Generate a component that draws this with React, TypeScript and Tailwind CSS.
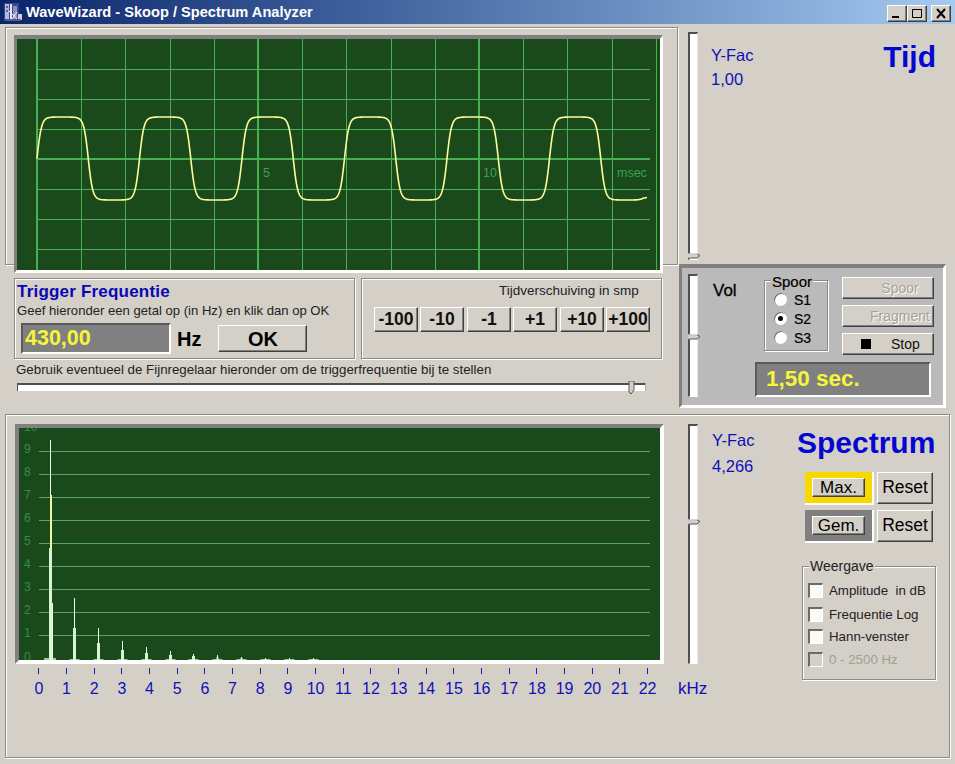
const FONT = '[font-family:"Liberation_Sans",Arial,sans-serif]'
const BLUE = 'text-[#1010b4]'
const RAISED =
  'border border-t-white border-l-white border-r-[#404040] border-b-[#404040] bg-[#d4d0c8] shadow-[inset_-1px_-1px_0_#808080]'
const ETCHED = 'border border-[#8c8a82] shadow-[1px_1px_0_#fff,inset_1px_1px_0_#fff]'
const READOUT =
  'flex items-center border-2 border-t-[#5a5a5a] border-l-[#5a5a5a] border-r-white border-b-white bg-[#808080] font-bold text-[#f5f53c]'

const SHIFT_BUTTONS = [
  { label: '-100', gap: 'mr-[2px]' },
  { label: '-10', gap: 'mr-[3px]' },
  { label: '-1', gap: 'mr-[2px]' },
  { label: '+1', gap: 'mr-[3px]' },
  { label: '+10', gap: 'mr-[2px]' },
  { label: '+100', gap: '' },
]

const SPIKES = [
  { x: 74.5, top: 598, thick: 628, w: 3 },
  { x: 98.5, top: 628, thick: 643, w: 3 },
  { x: 122.5, top: 641, thick: 650, w: 3 },
  { x: 146.5, top: 647, thick: 653, w: 3 },
  { x: 170.5, top: 651, thick: 655, w: 3 },
  { x: 193.5, top: 654, thick: 656, w: 3 },
  { x: 217.5, top: 655, thick: 657, w: 2 },
  { x: 241.5, top: 657, thick: 658, w: 2 },
  { x: 265.5, top: 658, thick: 659, w: 2 },
  { x: 289.5, top: 658, thick: 659, w: 1 },
  { x: 313.5, top: 658, thick: 659, w: 2 },
]

function wavePath() {
  const period = 102.5
  const k = 3.6
  const points: string[] = []
  for (let x = 37; x <= 643; x += 0.5) {
    const s = Math.sin((2 * Math.PI * (x - 37)) / period)
    const y = 158.5 - 41.5 * (Math.tanh(k * s) / Math.tanh(k))
    points.push(`${x},${y.toFixed(2)}`)
  }
  // the trace stops before the last rise
  points.push('647,197.5')
  return `M${points.join(' L')}`
}

function AppIcon() {
  return (
    <svg width="20" height="20" viewBox="0 0 20 20" className="mr-[3px] shrink-0">
      <rect x="1" y="1" width="15" height="18" fill="#3a4688" />
      <rect x="2" y="2" width="4" height="15" fill="#b4b8dc" />
      <rect x="3" y="4" width="2" height="2" fill="#5a62a0" />
      <rect x="3" y="8" width="2" height="2" fill="#5a62a0" />
      <rect x="7" y="2" width="2" height="15" fill="#e8e8f4" />
      <rect x="10" y="4" width="4" height="13" fill="#8a90c8" />
      <path d="M6 9 L14 17 M14 10 L9 17" stroke="#f4f4fa" strokeWidth="1" />
      <rect x="15" y="12" width="4" height="6" fill="#d0d0d8" />
      <rect x="3" y="17" width="15" height="2" fill="#5a5a88" />
    </svg>
  )
}

function CaptionButton({ kind, className = '' }: { kind: 'min' | 'max' | 'close'; className?: string }) {
  return (
    <div className={`flex h-[17px] w-[20px] items-center justify-center ${RAISED} ${className}`}>
      <svg width="12" height="11" viewBox="0 0 12 11">
        {kind === 'min' && <rect x="1" y="8" width="7" height="2" fill="#000" />}
        {kind === 'max' && (
          <path d="M1.5 1.5 H10.5 V9.5 H1.5 Z M1 1.5 H11" fill="none" stroke="#000" strokeWidth="1" />
        )}
        {kind === 'close' && <path d="M2 1 L10 10 M10 1 L2 10" stroke="#000" strokeWidth="2" />}
      </svg>
    </div>
  )
}

function VSlider({ height, thumb }: { height: string; thumb: string }) {
  return (
    <div
      className={`relative w-[10px] shrink-0 border-2 border-r border-b border-t-[#505050] border-l-[#505050] border-r-[#e8e8e8] border-b-white bg-white ${height}`}
    >
      <svg width="14" height="6" viewBox="0 0 14 6" className={`absolute left-[-3px] ${thumb}`}>
        <path d="M0 1 H10 L13 2.5 L10 5 H3 L2 6" fill="#d4d0c8" stroke="#555" strokeWidth="1" />
        <path d="M0 1 H10" stroke="#fff" strokeWidth="1" />
      </svg>
    </div>
  )
}

function Oscilloscope() {
  const verticals = Array.from({ length: 15 }, (_, i) => Math.round(37 + i * 44.2))
  const horizontals = [69, 99, 129, 189, 219, 249]
  return (
    <div className="h-[238px] w-[649px] border-t-4 border-l-3 border-r-3 border-b-3 border-t-[#808080] border-l-[#808080] border-r-white border-b-white">
      <svg width="643" height="231" viewBox="17 39 643 231" className="block bg-[#1a4a1c]">
        {verticals.map((x, i) =>
          i % 5 === 0 ? (
            <line key={x} x1={x} x2={x} y1="39" y2="270" stroke="#4aae55" strokeWidth="2" />
          ) : (
            <line key={x} x1={x + 0.5} x2={x + 0.5} y1="39" y2="270" stroke="#4aae55" />
          ),
        )}
        {horizontals.map((y) => (
          <line key={y} x1="37" x2="650" y1={y + 0.5} y2={y + 0.5} stroke="#4aae55" />
        ))}
        <line x1="37" x2="650" y1="159" y2="159" stroke="#4aae55" strokeWidth="2" />
        <path d={wavePath()} fill="none" stroke="#fdfd9c" strokeWidth="1.6" />
        <g fontFamily="Liberation Sans" fontSize="12.5" fill="#3f9f50">
          <text x="263" y="177">5</text>
          <text x="483" y="177">10</text>
          <text x="617" y="177">msec</text>
        </g>
      </svg>
    </div>
  )
}

function SpectrumPlot() {
  const lines = [9, 8, 7, 6, 5, 4, 3, 2, 1]
  const yOf = (n: number) => Math.round(658.5 - n * 23.05) + 0.5
  return (
    <div className="h-[240px] w-[649px] border-t-4 border-l-4 border-r-4 border-b-4 border-t-[#808080] border-l-[#808080] border-r-white border-b-white">
      <svg width="641" height="232" viewBox="19 428 641 232" className="block bg-[#1a4a1c]">
        {lines.map((n) => (
          <line key={n} x1="39" x2="650" y1={yOf(n)} y2={yOf(n)} stroke="#57a560" />
        ))}
        <g fontFamily="Liberation Sans" fontSize="12" fill="#3a8a46">
          <text x="24" y="431">10</text>
          {[...lines, 0].map((n) => (
            <text key={n} x="24" y={yOf(n) + 1}>
              {n}
            </text>
          ))}
        </g>
        <rect x="44" y="658" width="12" height="2" fill="#e0f5dc" opacity="0.7" />
        <line x1="50.5" x2="50.5" y1="440" y2="660" stroke="#eaffe4" />
        <line x1="51" x2="51" y1="495" y2="660" stroke="#f5f5a8" strokeWidth="2" />
        <rect x="49" y="548" width="3" height="112" fill="#d4f5d0" />
        <line x1="52.5" x2="52.5" y1="603" y2="660" stroke="#eaffe4" />
        {SPIKES.map((s) => (
          <g key={s.x}>
            <rect x={s.x - 5} y="659" width="10" height="1" fill="#e0f5dc" opacity="0.7" />
            <line x1={s.x} x2={s.x} y1={s.top} y2="660" stroke="#eaffe4" />
            <rect x={s.x - s.w / 2} y={s.thick} width={s.w} height={660 - s.thick} fill="#d4f5d0" />
          </g>
        ))}
      </svg>
    </div>
  )
}

function Radio({ label, checked = false }: { label: string; checked?: boolean }) {
  return (
    <div className="flex h-[19px] items-center">
      <div className="flex h-[13px] w-[13px] items-center justify-center rounded-full bg-white shadow-[inset_1px_1px_0_#707070]">
        {checked && <div className="h-[5px] w-[5px] rounded-full bg-black" />}
      </div>
      <span className="ml-[7px] text-[14px] leading-none text-black [-webkit-text-stroke:0.2px_#000]">{label}</span>
    </div>
  )
}

function Check({ label, disabled = false, className = '' }: { label: string; disabled?: boolean; className?: string }) {
  return (
    <div className={`flex h-[15px] items-center ${className}`}>
      <div
        className={`h-[15px] w-[15px] border-2 border-r border-b border-t-[#6a6a6a] border-l-[#6a6a6a] border-r-white border-b-white ${
          disabled ? 'bg-[#d4d0c8]' : 'bg-[#fafaf6]'
        }`}
      />
      <span className={`ml-[6px] whitespace-pre text-[13.3px] leading-none ${disabled ? 'text-[#a19e96]' : 'text-[#222]'}`}>{label}</span>
    </div>
  )
}

function ModeRow({ label, frame, mt = '' }: { label: string; frame: string; mt?: string }) {
  return (
    <div className={`flex ${mt}`}>
      <div className={`flex h-[33px] w-[69px] items-center justify-center ${frame}`}>
        <div className={`flex h-[19px] w-[53px] items-center justify-center text-[17px] leading-none text-black ${RAISED}`}>
          {label}
        </div>
      </div>
      <div className={`ml-[3px] flex h-[32px] w-[56px] items-center justify-center text-[17.5px] leading-none text-black ${RAISED}`}>
        Reset
      </div>
    </div>
  )
}

export default function App() {
  return (
    <div className={`flex h-[764px] w-[955px] flex-col overflow-hidden bg-[#d4d0c8] ${FONT}`}>
      {/* title bar */}
      <div className="flex h-[24px] shrink-0 items-center bg-gradient-to-r from-[#0a246a] to-[#a6caf0] pl-[3px] pr-[4px]">
        <AppIcon />
        <span className="mt-[1px] text-[14.6px] font-bold leading-none text-white">WaveWizard - Skoop / Spectrum Analyzer</span>
        <div className="ml-auto mt-[3px] flex">
          <CaptionButton kind="min" />
          <CaptionButton kind="max" />
          <CaptionButton kind="close" className="ml-[4px]" />
        </div>
      </div>

      {/* time section */}
      <div className="flex h-[390px] shrink-0">
        <div className="w-[679px] shrink-0 pl-[5px]">
          <div className={`mt-[3px] h-[238px] w-[673px] pl-[8px] pt-[7px] ${ETCHED}`}>
            <Oscilloscope />
          </div>
          <div className="ml-[9px] mt-[13px] flex">
            <div className={`h-[81px] w-[341px] pl-[2px] ${ETCHED}`}>
              <div className="mt-[4px] text-[17px] font-bold leading-none tracking-[0.2px] text-[#0808b4]">Trigger Frequentie</div>
              <div className="mt-[4px] text-[13.1px] leading-none text-[#222]">
                Geef hieronder een getal op (in Hz) en klik dan op OK
              </div>
              <div className="ml-[4px] mt-[6px] flex items-center">
                <div className={`h-[31px] w-[150px] pl-[2px] text-[21.5px] leading-none ${READOUT}`}>430,00</div>
                <span className="ml-[6px] text-[20px] font-bold leading-none text-black">Hz</span>
                <div className={`ml-[17px] flex h-[27px] w-[89px] items-center justify-center text-[20px] font-bold leading-none text-black ${RAISED}`}>
                  OK
                </div>
              </div>
            </div>
            <div className={`ml-[6px] h-[81px] w-[301px] ${ETCHED}`}>
              <div className="ml-[137px] mt-[5px] h-[14px] text-[13.5px] leading-none text-[#222]">Tijdverschuiving in smp</div>
              <div className="ml-[12px] mt-[9px] flex">
                {SHIFT_BUTTONS.map((b) => (
                  <div
                    key={b.label}
                    className={`flex h-[25px] w-[44px] items-center justify-center text-[17.5px] font-bold leading-none text-[#111] ${b.gap} ${RAISED}`}
                  >
                    {b.label}
                  </div>
                ))}
              </div>
            </div>
          </div>
          <div className="ml-[11px] mt-[4px] text-[13.3px] leading-none text-[#222]">
            Gebruik eventueel de Fijnregelaar hieronder om de triggerfrequentie bij te stellen
          </div>
          <div className="relative ml-[12px] mt-[7px] h-[8px] w-[628px] border-t-2 border-l border-t-[#505050] border-l-[#505050] bg-white">
            <svg width="8" height="14" viewBox="0 0 8 14" className="absolute left-[610px] top-[-4px]">
              <path d="M1 0 H6 V9 L3 13 L1 11 Z" fill="#d4d0c8" stroke="#555" strokeWidth="1" />
            </svg>
            <div className="absolute right-[-1px] top-[-2px] h-[8px] w-[1px] bg-[#aaa]" />
          </div>
        </div>

        <div className="min-w-0 flex-1">
          <div className="flex h-[240px] pl-[9px] pt-[8px]">
            <VSlider height="h-[228px]" thumb="top-[219px]" />
            <div className={`ml-[13px] mt-[15px] text-[16.5px] leading-none ${BLUE}`}>
              <div>Y-Fac</div>
              <div className="mt-[7px]">1,00</div>
            </div>
            <div className="ml-auto mr-[19px] mt-[10px] text-[30px] font-bold leading-none text-[#0606d2]">Tijd</div>
          </div>

          <div className="flex h-[144px] w-[267px] border-t-4 border-l-3 border-r-3 border-b-3 border-t-[#808080] border-l-[#808080] border-r-white border-b-white bg-[#bababa] pl-[6px] pt-[6px]">
            <VSlider height="h-[123px]" thumb="top-[58px]" />
            <div className="min-w-0 flex-1">
              <div className="flex">
                <div className="ml-[15px] mt-[8px] w-[51px] text-[17px] leading-none text-black [-webkit-text-stroke:0.3px_#000]">Vol</div>
                <div className={`relative mt-[6px] h-[71px] w-[64px] pl-[9px] pt-[9px] ${ETCHED}`}>
                  <span className="absolute left-[6px] top-[-7px] bg-[#bababa] px-[1px] text-[15px] leading-none text-black [-webkit-text-stroke:0.2px_#000]">Spoor</span>
                  <Radio label="S1" />
                  <Radio label="S2" checked />
                  <Radio label="S3" />
                </div>
                <div className="ml-[14px] mt-[3px]">
                  <div className={`flex h-[22px] w-[92px] items-center justify-center pl-[24px] text-[14px] leading-none text-[#a5a29a] [text-shadow:1px_1px_0_#fff] ${RAISED}`}>
                    Spoor
                  </div>
                  <div className={`mt-[6px] flex h-[22px] w-[92px] items-center justify-center pl-[24px] text-[14px] leading-none text-[#a5a29a] [text-shadow:1px_1px_0_#fff] ${RAISED}`}>
                    Fragment
                  </div>
                  <div className={`mt-[6px] flex h-[22px] w-[92px] items-center pl-[18px] text-[14px] leading-none text-[#111] ${RAISED}`}>
                    <span className="h-[10px] w-[10px] bg-black" />
                    <span className="ml-[20px]">Stop</span>
                  </div>
                </div>
              </div>
              <div className={`ml-[57px] mt-[7px] h-[35px] w-[176px] pl-[9px] text-[22.5px] leading-none ${READOUT}`}>1,50 sec.</div>
            </div>
          </div>
        </div>
      </div>

      {/* spectrum section */}
      <div className={`ml-[5px] flex h-[344px] w-[945px] shrink-0 pl-[9px] pt-[9px] ${ETCHED}`}>
        <div className="w-[649px] shrink-0">
          <SpectrumPlot />
          <div className={`ml-[10px] mt-[4px] grid grid-cols-[repeat(23,27.68px)] text-[16px] leading-none ${BLUE}`}>
            {Array.from({ length: 23 }, (_, i) => (
              <div key={i} className="flex flex-col items-center">
                <div className="h-[6px] w-[1px] bg-[#2020a0]" />
                <span className="mt-[7px]">{i}</span>
              </div>
            ))}
          </div>
          <div className="relative">
            <span className={`absolute left-[663px] top-[-17px] text-[17px] leading-none ${BLUE}`}>kHz</span>
          </div>
        </div>
        <div className="ml-[24px]">
          <VSlider height="h-[240px]" thumb="top-[93px]" />
        </div>
        <div className={`ml-[14px] mt-[8px] w-[60px] text-[16.5px] leading-none ${BLUE}`}>
          <div>Y-Fac</div>
          <div className="mt-[9px]">4,266</div>
        </div>
        <div className="ml-[25px] w-[140px]">
          <div className="mt-[4px] text-[30px] font-bold leading-none text-[#0606d2]">Spectrum</div>
          <div className="ml-[8px] mt-[14px]">
            <ModeRow label="Max." frame="bg-[#f7d800] border-b-2 border-r-2 border-white" />
            <ModeRow label="Gem." frame="bg-[#808080] border-b-2 border-r-2 border-white" mt="mt-[5px]" />
          </div>
          <div className={`relative ml-[5px] mt-[23px] h-[114px] w-[134px] pl-[5px] pt-[16px] ${ETCHED}`}>
            <span className="absolute left-[6px] top-[-8px] bg-[#d4d0c8] px-[1px] text-[14px] leading-none text-[#222]">Weergave</span>
            <Check label="Amplitude  in dB" />
            <Check label="Frequentie Log" className="mt-[9px]" />
            <Check label="Hann-venster" className="mt-[7px]" />
            <Check label="0 - 2500 Hz" disabled className="mt-[8px]" />
          </div>
        </div>
      </div>
    </div>
  )
}
